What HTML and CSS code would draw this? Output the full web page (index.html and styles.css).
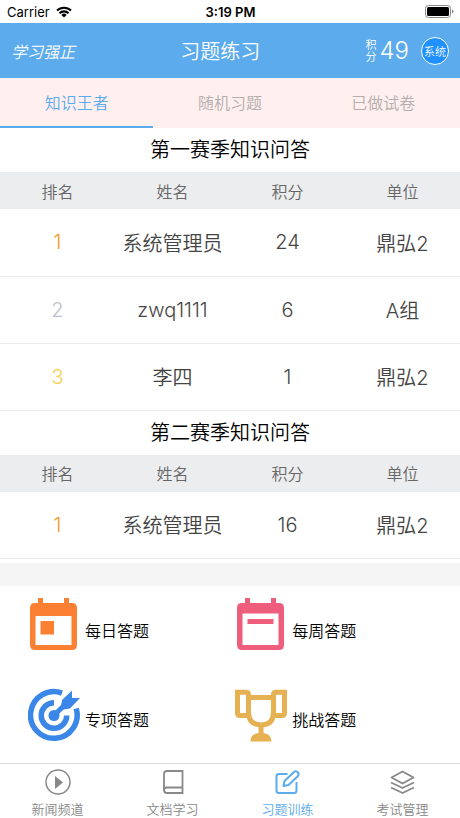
FILE: index.html
```html
<!DOCTYPE html>
<html lang="zh-CN">
<head>
<meta charset="utf-8">
<meta name="viewport" content="width=device-width, initial-scale=1">
<title>习题练习</title>
<link rel="stylesheet" href="styles.css">
</head>
<body>
<div class="status">
  <div class="status-left">
    <span>Carrier</span>
    <svg class="wifi" viewBox="0 0 16 12" aria-hidden="true"><path d="M1 4.600a10 10 0 0 1 14 0M3.500 7.200a6.400 6.400 0 0 1 9 0" fill="none" stroke="#000" stroke-width="2.100"/><path d="M8 11.500 5.400 8.900a3.700 3.700 0 0 1 5.200 0z"/></svg>
  </div>
  <span class="time">3:19 PM</span>
  <div class="status-right">
    <svg class="battery" viewBox="0 0 29 13" aria-hidden="true"><rect x=".5" y=".5" width="25" height="12" rx="3" fill="none" stroke="#888"/><rect x="2" y="2" width="22" height="9" rx="1.5"/><path d="M27 4.500q1.500.6 1.500 2t-1.500 2z" fill="#888"/></svg>
  </div>
</div>

<header class="header">
  <div class="logo">学习强正</div>
  <h1 class="page-title">习题练习</h1>
  <div class="account">
    <span class="score-label">积分</span>
    <span class="score">49</span>
    <button class="avatar" type="button">系统</button>
  </div>
</header>

<nav class="tabs">
  <a class="tab active" href="#king">知识王者</a>
  <a class="tab" href="#random">随机习题</a>
  <a class="tab" href="#done">已做试卷</a>
</nav>

<main class="main">
  <section class="rankings" id="king">
    <table class="ranking">
      <caption>第一赛季知识问答</caption>
      <thead><tr><th>排名</th><th>姓名</th><th>积分</th><th>单位</th></tr></thead>
      <tbody>
        <tr><td class="first">1</td><td>系统管理员</td><td>24</td><td>鼎弘2</td></tr>
        <tr><td class="second">2</td><td>zwq1111</td><td>6</td><td>A组</td></tr>
        <tr><td class="third">3</td><td>李四</td><td>1</td><td>鼎弘2</td></tr>
      </tbody>
    </table>
    <table class="ranking">
      <caption>第二赛季知识问答</caption>
      <thead><tr><th>排名</th><th>姓名</th><th>积分</th><th>单位</th></tr></thead>
      <tbody>
        <tr><td class="first">1</td><td>系统管理员</td><td>16</td><td>鼎弘2</td></tr>
      </tbody>
    </table>
  </section>

  <section class="quizzes">
    <a class="quiz" href="#daily">
      <svg viewBox="0 0 52 64" aria-hidden="true"><path fill="#fb8033" fill-rule="evenodd" d="M10 0h5v5h21V0h5v5h3q5 0 5 5v37q0 5-5 5H7q-5 0-5-5V10q0-5 5-5h3zM7.500 18v29h36V18z"/><path fill="#fb8033" d="M12.500 23h13.500v13.500H12.500z"/></svg>
      <span>每日答题</span>
    </a>
    <a class="quiz" href="#weekly">
      <svg viewBox="0 0 52 64" aria-hidden="true"><path fill="#ef5d7c" fill-rule="evenodd" d="M10 0h5v5h21V0h5v5h3q5 0 5 5v37q0 5-5 5H7q-5 0-5-5V10q0-5 5-5h3zM7.500 15.500V47h36V15.500z"/><path fill="#ef5d7c" d="M12.500 21h26v5h-26z"/></svg>
      <span>每周答题</span>
    </a>
    <a class="quiz" href="#special">
      <svg viewBox="0 0 52 64" aria-hidden="true"><g fill="none" stroke="#3b87e8" stroke-width="5.500"><path d="M34 6.200A23.300 23.300 0 1 0 48.200 21.500"/><path d="M26 15.700A12.800 12.800 0 1 0 38.800 28.500"/></g><circle cx="26" cy="28.500" r="5.500" fill="#3b87e8"/><path d="M26 28.500 38 16.500" stroke="#3b87e8" stroke-width="5"/><path fill="#3b87e8" d="M34 13 44 3.500v7.500h8L42 21.500 32.500 23z"/></svg>
      <span>专项答题</span>
    </a>
    <a class="quiz" href="#challenge">
      <svg viewBox="0 0 52 64" aria-hidden="true"><g fill="none" stroke="#e6b153" stroke-width="5"><path d="M13.500 10.500h25V25q0 13-12.500 13T13.500 25z"/><path d="M13.500 28.500H5q-2.500 0-2.500-2.500V5.200H11q2.500 0 2.500 2.500zM38.500 28.500H47q2.500 0 2.500-2.500V5.200H41q-2.500 0-2.500 2.500z"/></g><path fill="#e6b153" d="M23.500 38h5v8q8 1 8 8.500h-21q0-7.500 8-8.500z"/></svg>
      <span>挑战答题</span>
    </a>
  </section>
</main>

<nav class="tabbar">
  <a class="bar-item" href="#news">
    <svg viewBox="0 0 26 26" aria-hidden="true"><circle cx="13" cy="13" r="12" fill="none" stroke="currentColor" stroke-width="1.500"/><path fill="currentColor" d="M10 7v13l8-6.500z"/></svg>
    <span>新闻频道</span>
  </a>
  <a class="bar-item" href="#docs">
    <svg viewBox="0 0 26 26" fill="none" stroke="currentColor" stroke-width="1.800" aria-hidden="true"><path d="M22.500 18.500V2H7Q4 2 4 5v16.500"/><path d="M22.500 18.500H7q-3 0-3 2.500 0 3 3 3h15.500v-5.500"/></svg>
    <span>文档学习</span>
  </a>
  <a class="bar-item active" href="#practice">
    <svg viewBox="0 0 26 26" fill="none" stroke="currentColor" stroke-width="2" stroke-linejoin="round" aria-hidden="true"><path d="M12.500 5H4Q1.500 5 1.500 7.500v14Q1.500 24 4 24h15q2.500 0 2.500-2.500V13"/><path d="m8.500 17 1-5L19 3q1.500-1.500 3.500 0t.5 4l-9.500 9z"/></svg>
    <span>习题训练</span>
  </a>
  <a class="bar-item" href="#exams">
    <svg viewBox="0 0 26 26" fill="none" stroke="currentColor" stroke-width="1.800" stroke-linejoin="round" aria-hidden="true"><path d="m12.500 2.500 11 6-11 6-11-6zM1 13.500l11.500 5.500L24 13.500M1 18.500l11.500 5.500L24 18.500"/></svg>
    <span>考试管理</span>
  </a>
</nav>
</body>
</html>
```
FILE: styles.css
```css
* { box-sizing: border-box; }

body {
  margin: 0;
  min-height: 100vh;
  display: flex;
  flex-direction: column;
  background: #fff;
  color: #000;
  font-family: Inter, "Noto Sans CJK SC", sans-serif;
  font-size: 16px;
  font-weight: 350;
}

a { color: inherit; text-decoration: none; }
svg { display: block; flex: none; }

.status {
  display: grid;
  grid-template-columns: 1fr auto 1fr;
  align-items: center;
  height: 23px;
  padding: 0 6px 0 7px;
  font-size: 13px;
  font-weight: 400;
}
.status-left { display: flex; align-items: center; gap: 6px; }
.status-right { display: flex; justify-content: flex-end; }
.time { font-weight: 600; }
.wifi { width: 16px; height: 12px; }
.battery { width: 29px; height: 13px; }

.header {
  display: flex;
  align-items: center;
  justify-content: space-between;
  height: 55px;
  padding: 0 11px;
  background: #5cabed;
  color: #fff;
}
.logo { font-size: 16px; font-style: italic; }
.page-title { margin: 0; font-size: 20px; font-weight: 350; }
.account { display: flex; align-items: center; }
.score-label { width: 11px; margin-right: 3px; font-size: 11px; line-height: 12px; }
.score { margin-right: 12px; font-size: 24px; }
.avatar {
  width: 28px;
  height: 28px;
  padding: 0;
  border: 1px solid #fff;
  border-radius: 50%;
  background: #1e90ff;
  color: #fff;
  font: inherit;
  font-size: 11px;
}

.tabs { display: flex; height: 50px; background: #fff0ef; color: #b5adad; }
.tab {
  flex: 1;
  display: flex;
  align-items: center;
  justify-content: center;
  border-bottom: 2px solid transparent;
}
.tab.active { border-color: #5cabed; color: #5cabed; }

.main { flex: 1; display: flex; flex-direction: column; }
.rankings { padding-bottom: 4px; }
.ranking { width: 100%; table-layout: fixed; border-collapse: collapse; text-align: center; }
.ranking caption { font-size: 20px; line-height: 44px; }
.ranking th { height: 37px; padding: 0; background: #ecedef; color: #666; font-weight: 350; }
.ranking td { height: 67px; padding: 0; border-bottom: 1px solid #ececec; color: #444; font-size: 20px; }
.ranking .first { color: #f59a23; }
.ranking .second { color: #c0c0cc; }
.ranking .third { color: #f5cf4a; }

.quizzes {
  flex: 1;
  display: grid;
  grid-template-columns: 48% 48%;
  grid-auto-rows: 1fr;
  padding-left: 28px;
  border-top: 23px solid #f5f5f5;
}
.quiz { display: flex; align-items: center; gap: 5px; }
.quiz svg { width: 52px; height: 64px; }

.tabbar { display: flex; height: 55px; border-top: 1px solid #d8d8d8; color: #888; font-size: 13px; }
.bar-item { flex: 1; display: flex; flex-direction: column; align-items: center; padding-top: 5px; line-height: 18px; gap: 5px; }
.bar-item.active { color: #5cabed; }
.bar-item svg { width: 26px; height: 26px; }
```
